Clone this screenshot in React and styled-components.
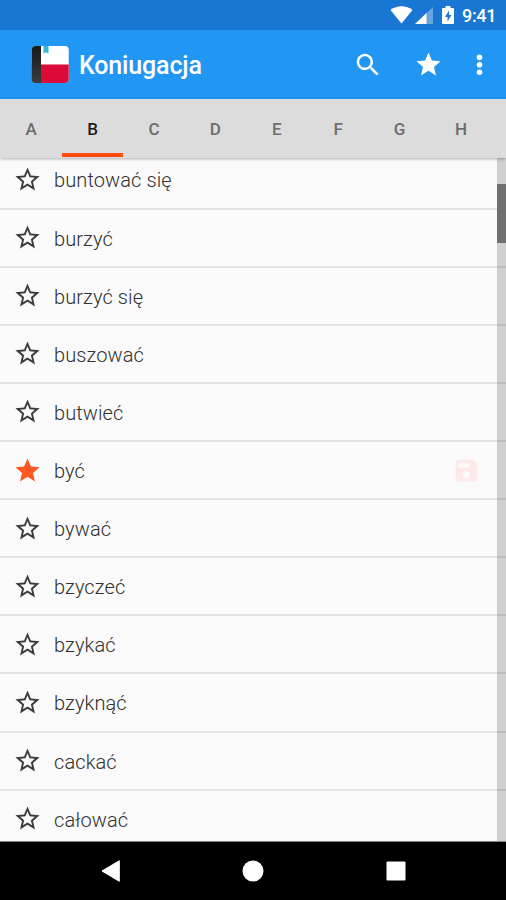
import React from 'react';
import styled, { createGlobalStyle } from 'styled-components';

const GlobalStyle = createGlobalStyle`
  * { box-sizing: border-box; }
  body { margin: 0; background: #000; font-family: Roboto, "Noto Sans", sans-serif; }
`;

const Screen = styled.div`
  width: 506px;
  height: 900px;
  display: flex;
  flex-direction: column;
  overflow: hidden;
  background: #fafafa;
`;

const Icon = styled.svg`
  display: block;
  flex: none;
  fill: ${(p) => p.$color || '#fff'};
`;

const StatusBar = styled.div`
  flex: none;
  height: 30px;
  padding-right: 10px;
  display: flex;
  align-items: center;
  justify-content: flex-end;
  background: #1976d2;
  color: #fff;
`;

const SignalIcon = styled(Icon)`
  margin-left: 2px;
`;

const BatteryIcon = styled(Icon)`
  margin-left: 9px;
`;

const Clock = styled.span`
  width: 34px;
  margin: 2px 0 0 8px;
  font-size: 18px;
  font-weight: 500;
  line-height: 30px;
  letter-spacing: -0.35px;
  white-space: nowrap;
`;

const AppBar = styled.header`
  flex: none;
  height: 69px;
  padding: 0 5px 0 31px;
  display: flex;
  align-items: center;
  background: #2196f3;
  color: #fff;
`;

const Title = styled.h1`
  flex: 1;
  margin: 2px 0 0 10px;
  font-size: 25px;
  font-weight: 500;
  line-height: 36px;
  letter-spacing: -0.15px;
`;

const Actions = styled.div`
  display: flex;
  align-items: center;
`;

const IconButton = styled.button`
  width: ${(p) => p.$width}px;
  height: 48px;
  padding: 0;
  border: 0;
  background: none;
  display: flex;
  align-items: center;
  justify-content: center;
`;

const Tabs = styled.nav`
  flex: none;
  height: 59px;
  padding-left: 0.5px;
  display: flex;
  background: #dcdcdc;
  box-shadow: 0 1px 3px rgba(0, 0, 0, 0.3);
  position: relative;
  z-index: 1;
`;

const Tab = styled.div`
  flex: 0 0 61.4px;
  height: 58px;
  padding-top: 6px;
  border-bottom: 4px solid ${(p) => (p.$active ? '#ff4b12' : 'transparent')};
  display: flex;
  align-items: center;
  justify-content: center;
  font-size: 17px;
  font-weight: 500;
  color: ${(p) => (p.$active ? '#1c1c1c' : '#6d6d6d')};
`;

const Content = styled.main`
  flex: 1;
  min-height: 0;
  position: relative;
  overflow: hidden;
  border-bottom: 1px solid #858585;
`;

const List = styled.ul`
  list-style: none;
  margin: -6.6px 0 0;
  padding: 0;
`;

const Row = styled.li`
  height: 58.12px;
  padding: 0 25px 0 13px;
  border-bottom: 2px solid #e4e4e4;
  display: flex;
  align-items: center;
`;

const Verb = styled.span`
  flex: 1;
  margin: 2px 0 0 12px;
  font-size: 20px;
  font-weight: 300;
  line-height: 28px;
  letter-spacing: 0.1px;
  color: #303030;
`;

const ScrollTrack = styled.div`
  position: absolute;
  top: 0;
  right: 0;
  bottom: 0;
  width: 9px;
  padding-top: 26px;
  background: rgba(0, 0, 0, 0.17);
`;

const ScrollThumb = styled.div`
  height: 59px;
  background: #707070;
`;

const NavBar = styled.footer`
  flex: none;
  height: 58px;
  padding: 0 39px 0 40px;
  display: grid;
  grid-template-columns: repeat(3, 1fr);
  justify-items: center;
  align-items: center;
  background: #000;
`;

const STAR = 'M12 17.27L18.18 21l-1.64-7.03L22 9.24l-7.19-.61L12 2 9.19 8.63 2 9.24l5.46 4.73L5.82 21z';
const STAR_OUTLINE =
  'M22 9.24l-7.19-.62L12 2 9.19 8.63 2 9.24l5.46 4.73L5.82 21 12 17.27 18.18 21l-1.63-7.03L22 9.24zM12 15.4l-3.76 2.27 1-4.28-3.32-2.88 4.38-.38L12 6.1l1.71 4.04 4.38.38-3.32 2.88 1 4.28L12 15.4z';

const LETTERS = ['A', 'B', 'C', 'D', 'E', 'F', 'G', 'H'];

const VERBS = [
  { name: 'buntować się' },
  { name: 'burzyć' },
  { name: 'burzyć się' },
  { name: 'buszować' },
  { name: 'butwieć' },
  { name: 'być', favorite: true, saved: true },
  { name: 'bywać' },
  { name: 'bzyczeć' },
  { name: 'bzykać' },
  { name: 'bzyknąć' },
  { name: 'cackać' },
  { name: 'całować' },
];

function BookLogo() {
  return (
    <Icon width="38" height="38" viewBox="0 0 38 38">
      <defs>
        <clipPath id="cover">
          <rect x="0.7" y="0" width="37" height="37" rx="4" />
        </clipPath>
        <linearGradient id="spine" x1="0" y1="0" x2="0" y2="1">
          <stop offset="0" stopColor="#17191a" />
          <stop offset="1" stopColor="#3c3e3c" />
        </linearGradient>
      </defs>
      <g clipPath="url(#cover)">
        <rect width="38" height="38" fill="#fff" />
        <rect y="18.500" width="38" height="19.500" fill="#dc0a38" />
        <rect width="10" height="38" fill="url(#spine)" />
        <path d="M12.500 0h5v7.500l-2.500-1.200L12.500 7.500z" fill="#35b5d8" />
      </g>
    </Icon>
  );
}

export default function App() {
  return (
    <>
      <GlobalStyle />
      <Screen>
        <StatusBar>
          <Icon width="23" height="18" viewBox="0 0 23 18">
            <path d="M0.500 4C7 -1 16 -1 22.500 4L11.500 17.500z" />
          </Icon>
          <SignalIcon width="18" height="17" viewBox="0 0 18 17">
            <path d="M18 0V17H0z" opacity="0.35" />
            <path d="M11.500 6V17H0z" />
          </SignalIcon>
          <BatteryIcon width="12" height="18" viewBox="0 0 12 18">
            <path d="M3.500 0h5v2H11q1 0 1 1v14q0 1-1 1H1q-1 0-1-1V3q0-1 1-1h2.500z" />
            <path d="M7 4.500L3 11h2.500v4.500L9.500 9H7z" fill="#1976d2" />
          </BatteryIcon>
          <Clock>9:41</Clock>
        </StatusBar>
        <AppBar>
          <BookLogo />
          <Title>Koniugacja</Title>
          <Actions>
            <IconButton $width={60} aria-label="Search">
              <Icon width="30" height="30" viewBox="0 0 24 24">
                <path d="M15.500 14h-.79l-.28-.27C15.410 12.590 16 11.110 16 9.500 16 5.910 13.090 3 9.500 3S3 5.910 3 9.500 5.910 16 9.500 16c1.610 0 3.090-.59 4.230-1.570l.27.28v.79l5 4.990L20.490 19l-4.990-5zm-6 0C7.010 14 5 11.990 5 9.500S7.010 5 9.500 5 14 7.010 14 9.500 11.990 14 9.500 14z" />
              </Icon>
            </IconButton>
            <IconButton $width={60} aria-label="Favorites">
              <Icon width="29" height="29" viewBox="0 0 24 24">
                <path d={STAR} />
              </Icon>
            </IconButton>
            <IconButton $width={43} aria-label="More">
              <Icon width="29" height="30" viewBox="0 0 24 24">
                <circle cx="12" cy="5.700" r="2.300" />
                <circle cx="12" cy="11.900" r="2.300" />
                <circle cx="12" cy="18" r="2.300" />
              </Icon>
            </IconButton>
          </Actions>
        </AppBar>
        <Tabs>
          {LETTERS.map((letter) => (
            <Tab key={letter} $active={letter === 'B'}>{letter}</Tab>
          ))}
        </Tabs>
        <Content>
          <List>
            {VERBS.map(({ name, favorite, saved }) => (
              <Row key={name}>
                <Icon width="29" height="29" viewBox="0 0 24 24" $color={favorite ? '#ff5722' : '#3c3c3c'}>
                  <path d={favorite ? STAR : STAR_OUTLINE} />
                </Icon>
                <Verb>{name}</Verb>
                {saved && (
                  <Icon width="29" height="29" viewBox="0 0 24 24" $color="#fde9e8">
                    <path
                      fillRule="evenodd"
                      d="M5 3h12l4 4v12a2 2 0 0 1-2 2H5a2 2 0 0 1-2-2V5a2 2 0 0 1 2-2zM5.500 5.500v4H15v-4zM12 12.500a3 3 0 1 0 0 6 3 3 0 0 0 0-6z"
                    />
                  </Icon>
                )}
              </Row>
            ))}
          </List>
          <ScrollTrack>
            <ScrollThumb />
          </ScrollTrack>
        </Content>
        <NavBar>
          <Icon width="20" height="22" viewBox="0 0 20 22">
            <path d="M18.300 0.700V21.300L1 11z" stroke="#fff" strokeLinejoin="round" />
          </Icon>
          <Icon width="22" height="22" viewBox="0 0 22 22">
            <circle cx="11" cy="11" r="10.500" />
          </Icon>
          <Icon width="20" height="20" viewBox="0 0 20 20">
            <rect x="0.500" y="0.500" width="19" height="19" rx="1" />
          </Icon>
        </NavBar>
      </Screen>
    </>
  );
}
